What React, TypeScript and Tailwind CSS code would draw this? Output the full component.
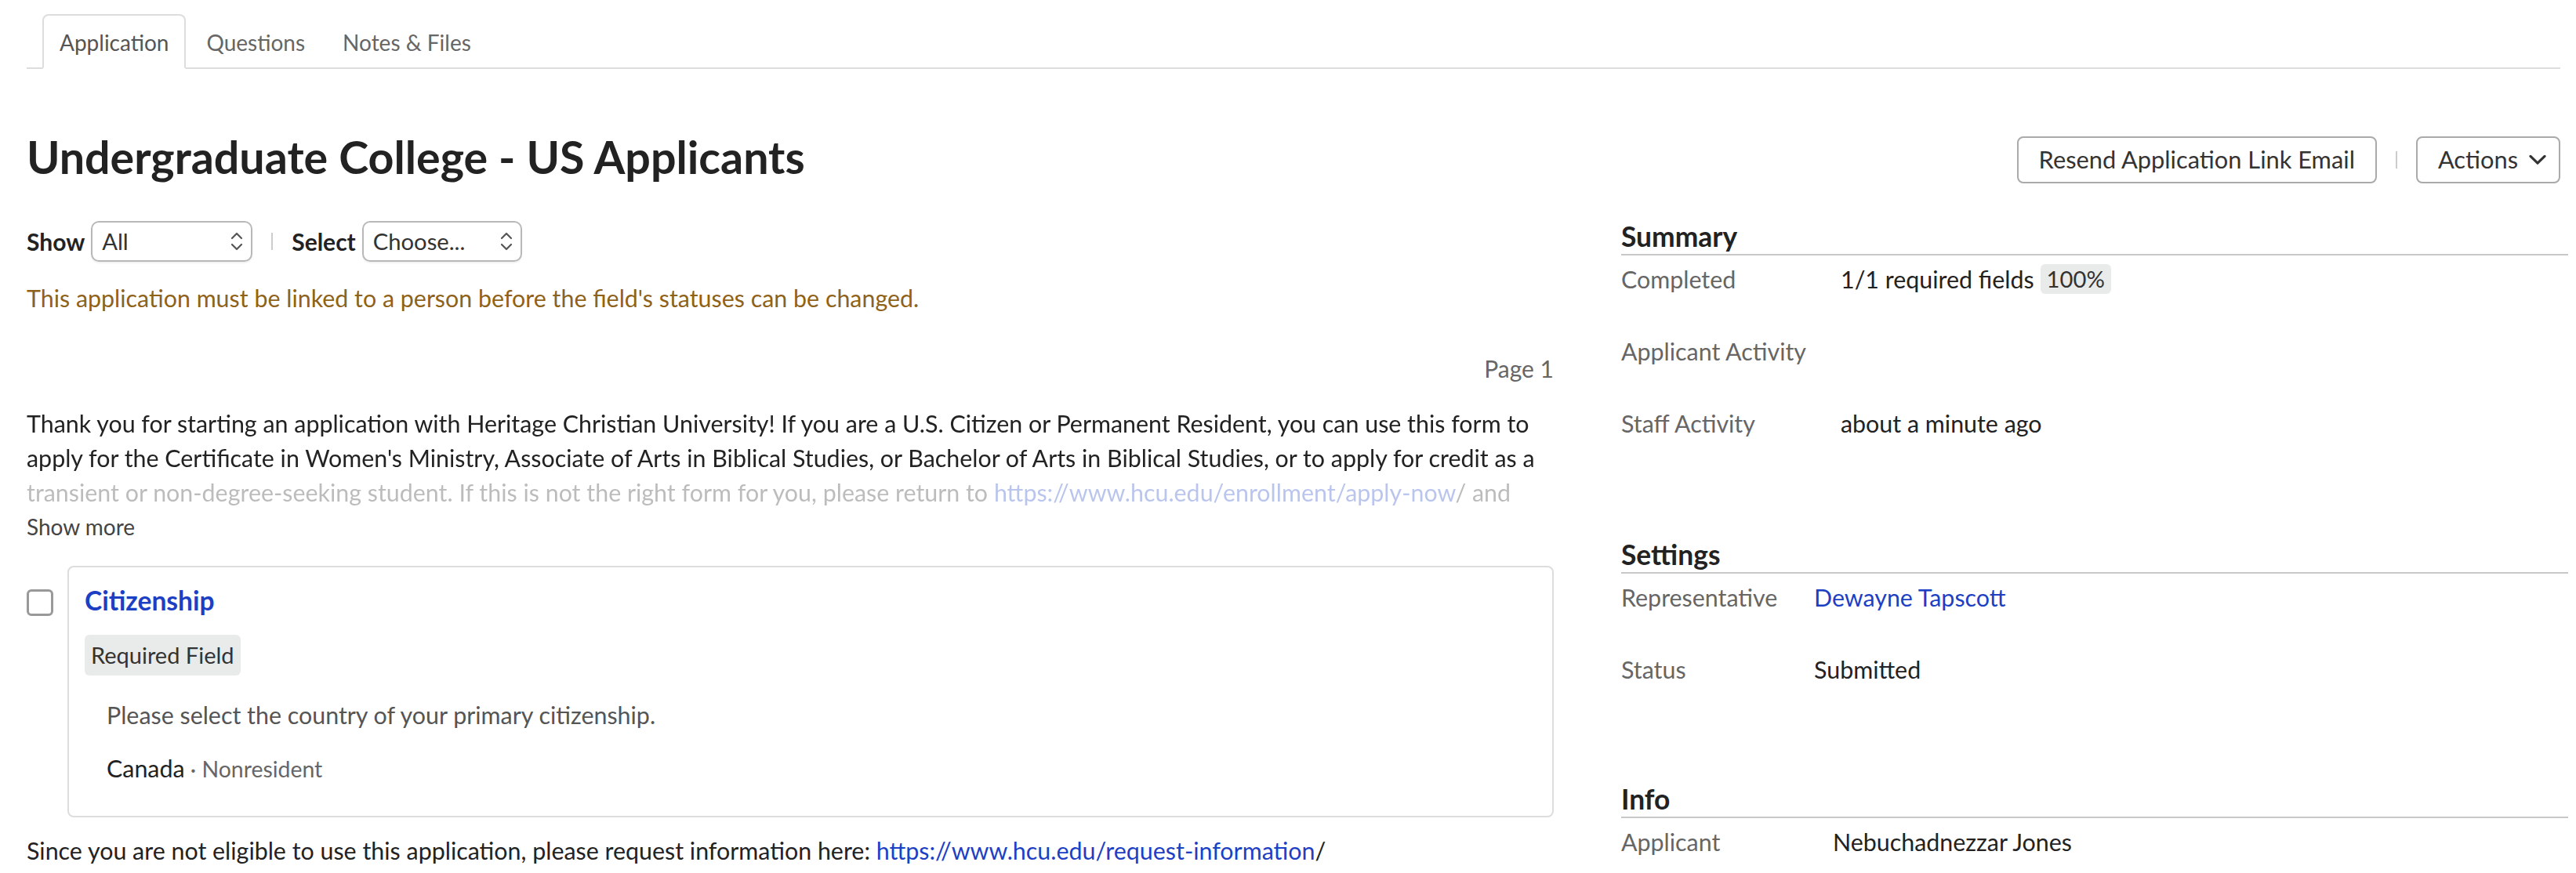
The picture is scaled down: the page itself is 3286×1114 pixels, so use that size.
import type { ReactNode } from "react";

function UpDown() {
  return (
    <svg width="8" height="12" viewBox="0 0 8 12" fill="none" stroke="#555" strokeWidth="1.1" strokeLinecap="round" strokeLinejoin="round">
      <path d="M1 4 4 1 7 4" />
      <path d="M1 8 4 11 7 8" />
    </svg>
  );
}

function Caret() {
  return (
    <svg width="11" height="7" viewBox="0 0 11 7" fill="none" stroke="#333" strokeWidth="1.6" strokeLinecap="round" strokeLinejoin="round">
      <path d="M1 1.2 5.5 5.6 10 1.2" />
    </svg>
  );
}

function FakeSelect({ value, width }: { value: string; width: string }) {
  return (
    <div
      className={`${width} flex h-[26px] items-center justify-between rounded-[5px] border border-[#b8b8b8] pl-[6px] pr-[5px] text-[14.6px] text-[#333] shadow-[0_1px_1px_rgba(0,0,0,0.06)]`}
    >
      <span>{value}</span>
      <UpDown />
    </div>
  );
}

function Section({ title, children, className = "" }: { title: string; children: ReactNode; className?: string }) {
  return (
    <section className={className}>
      <h2 className="border-b border-[#c8c8c8] pb-[1px] text-[17.7px] font-bold leading-[20px] text-[#222]">{title}</h2>
      {children}
    </section>
  );
}

function Row({ label, labelWidth, children }: { label: string; labelWidth: string; children?: ReactNode }) {
  return (
    <div className="flex pb-[20px] pt-[4px] text-[15.2px] leading-[22px]">
      <div className={`${labelWidth} shrink-0 text-[#666]`}>{label}</div>
      <div className="flex items-center text-[#222]">{children}</div>
    </div>
  );
}

export default function App() {
  return (
    <div className="min-h-[557px] bg-white pl-[17px] pr-[5px] font-['Lato','Noto_Sans',sans-serif] text-[15.2px] text-[#222] [zoom:2]">
      {/* tabs */}
      <div className="mr-[5px] flex border-b border-[#ddd] pl-[10px] pt-[9px] text-[14px] leading-[20px]">
        <div className="-mb-px mr-[2px] rounded-t-[4px] border border-[#ddd] border-b-white bg-white px-[10px] pb-[6px] pt-[7px] text-[#555]">
          Application
        </div>
        <div className="-mb-px mr-[2px] border border-transparent px-[10px] pb-[6px] pt-[7px] text-[#666]">Questions</div>
        <div className="-mb-px border border-transparent px-[10px] pb-[6px] pt-[7px] text-[#666]">Notes &amp; Files</div>
      </div>

      {/* header */}
      <div className="mr-[5px] mt-[43px] flex items-center justify-between">
        <h1 className="-mt-[4px] text-[28.7px] font-bold leading-[30px] text-[#222]">Undergraduate College - US Applicants</h1>
        <div className="flex items-center">
          <button className="h-[30px] rounded-[4px] border border-[#aaa] px-[13px] text-[15.4px] text-[#333]">
            Resend Application Link Email
          </button>
          <span className="mx-[12px] h-[11px] w-px bg-[#ccc]" />
          <button className="flex h-[30px] items-center gap-[7px] rounded-[4px] border border-[#aaa] pl-[13px] pr-[8px] text-[15.4px] text-[#333]">
            Actions
            <Caret />
          </button>
        </div>
      </div>

      <div className="mt-[24px] flex gap-[43px]">
        {/* left column */}
        <div className="w-[974px] shrink-0">
          <div className="flex h-[26px] items-center text-[15px]">
            <span className="mr-[4px] font-bold">Show</span>
            <FakeSelect value="All" width="w-[103px]" />
            <span className="mx-[12px] h-[11px] w-px bg-[#ccc]" />
            <span className="mr-[4px] font-bold">Select</span>
            <FakeSelect value="Choose..." width="w-[102px]" />
          </div>

          <p className="mt-[12px] leading-[22px] text-[#8f6219]">
            This application must be linked to a person before the field's statuses can be changed.
          </p>

          <div className="mt-[23px] text-right text-[15px] leading-[22px] text-[#666]">Page 1</div>

          <p className="mt-[13px] leading-[22px] [mask-image:linear-gradient(to_bottom,#000_42px,rgba(0,0,0,0.3)_50px)]">
            Thank you for starting an application with Heritage Christian University! If you are a U.S. Citizen or Permanent
            Resident, you can use this form to apply for the Certificate in Women's Ministry, Associate of Arts in Biblical
            Studies, or Bachelor of Arts in Biblical Studies, or to apply for credit as a transient or non-degree-seeking
            student. If this is not the right form for you, please return to{" "}
            <a className="text-[#1c3fc4]">https://www.hcu.edu/enrollment/apply-now</a>/ and
          </p>
          <div className="text-[14px] leading-[22px] text-[#444]">Show more</div>

          <div className="mt-[14px] flex">
            <div className="mt-[15px] h-[17px] w-[17px] shrink-0 rounded-[3px] border-[1.5px] border-[#999]" />
            <div className="ml-[9px] flex-1 rounded-[4px] border border-[#ddd] px-[10px] pb-[19px] pt-[9px]">
              <div className="text-[16.8px] font-bold leading-[24px] text-[#1c3fc4]">Citizenship</div>
              <div className="mt-[10px] inline-block rounded-[3px] bg-[#e9eaea] px-[4px] text-[14.5px] leading-[26px] text-[#333]">
                Required Field
              </div>
              <div className="mt-[14px] pl-[14px] leading-[22px] text-[#555]">Please select the country of your primary citizenship.</div>
              <div className="mt-[12px] pl-[14px] leading-[22px]">
                <span className="text-[#222]">Canada</span>
                <span className="text-[14.2px] text-[#666]"> · Nonresident</span>
              </div>
            </div>
          </div>

          <p className="mt-[10px] leading-[22px]">
            Since you are not eligible to use this application, please request information here:{" "}
            <a className="text-[#1c3fc4]">https://www.hcu.edu/request-information</a>/
          </p>
        </div>

        {/* right column */}
        <div className="flex-1">
          <Section title="Summary">
            <Row label="Completed" labelWidth="w-[140px]">
              1/1 required fields
              <span className="ml-[4px] rounded-[3px] bg-[#e9eaea] px-[4px] text-[14.6px] leading-[19px] text-[#333]">100%</span>
            </Row>
            <Row label="Applicant Activity" labelWidth="w-[140px]" />
            <Row label="Staff Activity" labelWidth="w-[140px]">
              about a minute ago
            </Row>
          </Section>

          <Section title="Settings" className="mt-[43px]">
            <Row label="Representative" labelWidth="w-[123px]">
              <a className="text-[#1c3fc4]">Dewayne Tapscott</a>
            </Row>
            <Row label="Status" labelWidth="w-[123px]">
              Submitted
            </Row>
          </Section>

          <Section title="Info" className="mt-[42px]">
            <Row label="Applicant" labelWidth="w-[135px]">
              Nebuchadnezzar Jones
            </Row>
          </Section>
        </div>
      </div>
    </div>
  );
}
